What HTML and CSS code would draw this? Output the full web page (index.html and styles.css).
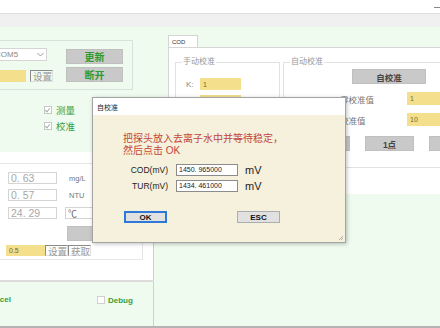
FILE: index.html
```html
<!DOCTYPE html>
<html lang="zh-CN">
<head>
    <meta charset="UTF-8">
    <meta name="viewport" content="width=device-width, initial-scale=1.0">
    <title>COD 校准</title>
    <link rel="stylesheet" href="styles.css">
</head>
<body>
    <div class="app">
        <div class="titlebar"><span class="min"></span></div>
        <div class="menubar"></div>

        <div class="workspace">
            <!-- 左侧: 连接 / 测量 -->
            <div class="left">
                <div class="conn">
                    <div class="group conn-group">
                        <div class="conn-fields">
                            <div class="combo">
                                <span>COM5</span>
                                <svg class="chev" width="7" height="5" viewBox="0 0 7 5"><path d="M0.5 1 L3.5 4 L6.5 1" fill="none" stroke="#9a9a9a" stroke-width="1"/></svg>
                            </div>
                            <div class="field-row">
                                <span class="input yellow conn-input"></span>
                                <span class="flat-btn">设置</span>
                            </div>
                        </div>
                        <div class="conn-buttons">
                            <span class="btn green">更新</span>
                            <span class="btn green">断开</span>
                        </div>
                    </div>
                    <div class="checks">
                        <div class="check"><span class="box checked"></span>测量</div>
                        <div class="check"><span class="box checked"></span>校准</div>
                    </div>
                </div>

                <div class="meas">
                    <div class="group meas-group">
                        <div class="meas-row">
                            <span class="input value">0. 63</span>
                            <span class="unit">mg/L</span>
                        </div>
                        <div class="meas-row r2">
                            <span class="input value">0. 57</span>
                            <span class="unit">NTU</span>
                        </div>
                        <div class="meas-row r3">
                            <span class="input value">24. 29</span>
                            <span class="combo small-combo"><span>℃</span>
                                <svg class="chev" width="7" height="5" viewBox="0 0 7 5"><path d="M0.5 1 L3.5 4 L6.5 1" fill="none" stroke="#9a9a9a" stroke-width="1"/></svg>
                            </span>
                        </div>
                        <div class="meas-row r4">
                            <span class="btn plain wide"></span>
                        </div>
                        <div class="meas-row r5">
                            <span class="input yellow k-input">0.5</span>
                            <span class="flat-btn">设置</span>
                            <span class="flat-btn">获取</span>
                        </div>
                    </div>
                </div>

                <div class="sep"></div>

                <div class="bottom">
                    <span class="excel">Excel</span>
                    <div class="check debug"><span class="box"></span>Debug</div>
                </div>
            </div>

            <!-- 右侧: COD 标签页 -->
            <div class="right">
                <div class="tab-head"><span class="tab">COD</span></div>
                <div class="tab-page">
                    <div class="group manual">
                        <span class="legend">手动校准</span>
                        <div class="k-row">
                            <span class="lbl">K:</span>
                            <span class="input yellow k-input">1</span>
                        </div>
                        <div class="k-row">
                            <span class="lbl">B:</span>
                            <span class="input yellow k-input">0</span>
                        </div>
                    </div>
                    <div class="group auto">
                        <span class="legend">自动校准</span>
                        <span class="btn plain auto-btn">自校准</span>
                        <div class="std-row">
                            <span class="std-lbl">零校准值</span>
                            <span class="input yellow std-input">1</span>
                        </div>
                        <div class="std-row">
                            <span class="std-lbl">校准值</span>
                            <span class="input yellow std-input">10</span>
                        </div>
                        <div class="pt-row">
                            <span class="btn plain pt-btn">0点</span>
                            <span class="btn plain pt-btn">1点</span>
                            <span class="btn plain pt-btn">2点</span>
                        </div>
                    </div>
                </div>
            </div>
        </div>

        <div class="statusline"></div>
    </div>

    <!-- 自校准 对话框 -->
    <div class="dialog">
        <div class="dialog-title">自校准</div>
        <div class="dialog-body">
            <p class="hint">把探头放入去离子水中并等待稳定，<br>然后点击 OK</p>
            <div class="mv-grid">
                <span class="mv-lbl">COD(mV)</span>
                <span class="mv-input">1450. 965000</span>
                <span class="mv-unit">mV</span>
                <span class="mv-lbl">TUR(mV)</span>
                <span class="mv-input">1434. 461000</span>
                <span class="mv-unit">mV</span>
            </div>
            <div class="dialog-buttons">
                <span class="dbtn ok">OK</span>
                <span class="dbtn esc">ESC</span>
            </div>
            <svg class="grip" width="6" height="6" viewBox="0 0 6 6"><path d="M5 1 L1 5 M5 3 L3 5" stroke="#b0b0b0" stroke-width="1"/></svg>
        </div>
    </div>
</body>
</html>
```

FILE: styles.css
```css
body {
    margin: 0;
    width: 440px;
    height: 328px;
    overflow: hidden;
    font-family: "Liberation Sans", "Noto Sans CJK SC", sans-serif;
    color: #333;
    position: relative;
}

.app {
    width: 440px;
    height: 328px;
    display: flex;
    flex-direction: column;
}

/* 窗口顶部 */
.titlebar {
    height: 13px;
    background: #fff;
    border-bottom: 1px solid #dedede;
    display: flex;
    justify-content: flex-end;
    align-items: center;
}

.titlebar .min {
    width: 6px;
    height: 1px;
    background: #888;
    margin-top: 2px;
}

.menubar {
    height: 13px;
    background: #f0f0f0;
}

.workspace {
    height: 299px;
    background: #eefbee;
    display: grid;
    grid-template-columns: 154px 1fr;
}

.statusline {
    height: 2px;
    background: #b4b4b4;
}

/* 通用 */
.group {
    box-sizing: border-box;
    border: 1px solid #d9e2d9;
    position: relative;
    flex-shrink: 0;
}

.input {
    box-sizing: border-box;
    display: inline-flex;
    align-items: center;
    height: 12px;
    border: 1px solid #d0d0d0;
    background: #fff;
    font-size: 7px;
    padding-left: 2px;
}

.yellow {
    background: #f3df8c;
    border-color: #f3df8c;
    color: #7a6a2a;
}

.btn {
    box-sizing: border-box;
    display: flex;
    align-items: center;
    justify-content: center;
    background: #c9c9c9;
    border: 1px solid #c0c0c0;
    font-weight: bold;
    flex-shrink: 0;
}

.btn.green {
    color: #2f9a2f;
    font-size: 10px;
}

.btn.plain {
    color: #444;
    font-size: 8.5px;
}

.flat-btn {
    box-sizing: border-box;
    height: 12px;
    display: inline-flex;
    align-items: center;
    padding-left: 2px;
    border-left: 1px solid #8a8a8a;
    border-top: 1px solid #8a8a8a;
    border-right: 1px solid #e0e0e0;
    border-bottom: 1px solid #e0e0e0;
    font-size: 9.5px;
    color: #999;
    width: 23px;
}

.combo {
    box-sizing: border-box;
    display: flex;
    align-items: center;
    justify-content: space-between;
    background: #fff;
    border: 1px solid #d4d4d4;
    color: #888;
    font-size: 8px;
    padding: 0 2px 0 0;
}

.check {
    display: flex;
    align-items: center;
    height: 16px;
    color: #3a9d3a;
    font-size: 9.5px;
}

.box {
    box-sizing: border-box;
    width: 8px;
    height: 8px;
    border: 1px solid #c8c8c8;
    background: #fff;
    margin-right: 4px;
    position: relative;
}

.box.checked::after {
    content: "";
    position: absolute;
    left: 1px;
    top: 0;
    width: 2px;
    height: 4px;
    border-right: 1px solid #aaa;
    border-bottom: 1px solid #aaa;
    transform: rotate(40deg);
}

/* 左上: 串口 */
.left {
    display: flex;
    flex-direction: column;
}

.conn {
    height: 125px;
}

.conn-group {
    margin: 13px 0 0 -10px;
    width: 143px;
    height: 50px;
    display: flex;
    padding: 7px 0 0 9px;
}

.conn-fields {
    width: 57px;
}

.conn-fields .combo {
    height: 13px;
    margin-left: -20px;
    padding-left: 14px;
    width: 67px;
}

.field-row {
    display: flex;
    gap: 4px;
    margin-top: 9px;
}

.conn-input {
    width: 26px;
}

.conn-buttons {
    display: flex;
    flex-direction: column;
    gap: 3px;
    margin: 1px 0 0 9px;
}

.conn-buttons .btn {
    width: 57px;
    height: 15px;
}

.checks {
    margin: 12px 0 0 44px;
}

/* 左中: 测量值 */
.meas {
    height: 128px;
    background: #fff;
    border-right: 1px solid #d0d0d0;
}

.meas-group {
    margin: 11px 0 0 -10px;
    width: 153px;
    height: 97px;
    border-color: #e6e6e6;
    padding: 8px 0 0 17px;
}

.meas-row {
    display: flex;
    align-items: center;
    height: 12px;
}

.meas-row .value {
    width: 49px;
    font-size: 10.5px;
    color: #a8a8a8;
    border-color: #d4d4d4;
}

.unit {
    margin-left: 12px;
    font-size: 7.5px;
    color: #777;
}

.r2 { margin-top: 5px; }
.r3 { margin-top: 6px; }
.r4 { margin-top: 7px; height: 15px; }
.r5 { margin-top: 4px; height: 11px; margin-left: -2px; }

.small-combo {
    margin-left: 8px;
    width: 45px;
    height: 12px;
    padding-left: 2px;
    font-size: 9px;
    color: #666;
}

.wide {
    margin-left: 59px;
    width: 60px;
    height: 15px;
}

.r5 .k-input {
    width: 39px;
    height: 11px;
}

.r5 .flat-btn:first-of-type {
    margin-left: 9px;
}

.r5 .flat-btn {
    width: 23px;
    height: 11px;
}

.sep {
    height: 2px;
    background: #dcdcdc;
}

.bottom {
    height: 44px;
    border-right: 1px solid #d0d0d0;
    box-sizing: border-box;
    display: flex;
    align-items: flex-start;
    padding-top: 13px;
}

.excel {
    margin-left: -10px;
    font-size: 8px;
    font-weight: bold;
    color: #3a9d3a;
    height: 10px;
    line-height: 10px;
}

.debug {
    margin-left: 86px;
    height: 10px;
    font-size: 8px;
    font-weight: bold;
}

.debug .box {
    border-color: #cfcfcf;
    margin-right: 3px;
}

/* 右侧: 标签页 */
.right {
    display: flex;
    flex-direction: column;
    overflow: hidden;
}

.tab-head {
    padding: 8px 0 0 14px;
    display: flex;
}

.tab {
    box-sizing: border-box;
    width: 30px;
    height: 12px;
    background: #fff;
    border: 1px solid #d4d4d4;
    border-bottom: none;
    font-size: 6px;
    color: #333;
    padding: 3px 0 0 3px;
}

.tab-page {
    margin-left: 14px;
    height: 147px;
    background: #fff;
    border-left: 1px solid #d6d6d6;
    border-top: 1px solid #d6d6d6;
    box-sizing: border-box;
    display: flex;
    align-items: flex-start;
    padding: 14px 0 0 6px;
    gap: 3px;
    overflow: hidden;
}

.legend {
    position: absolute;
    top: -6px;
    left: 6px;
    background: #fff;
    padding: 0 1px;
    font-size: 8px;
    line-height: 10px;
    color: #999;
}

.manual {
    width: 105px;
    height: 106px;
    border-color: #e2e2e2;
    padding: 15px 0 0 10px;
}

.k-row {
    display: flex;
    align-items: center;
    height: 12px;
    margin-bottom: 5px;
}

.lbl {
    width: 14px;
    font-size: 8px;
    color: #888;
}

.k-row .k-input {
    width: 41px;
    height: 12px;
}

.auto {
    width: 200px;
    height: 106px;
    border-color: #e2e2e2;
    padding: 6px 0 0 0;
}

.auto-btn {
    margin-left: 68px;
    width: 74px;
    height: 15px;
    font-size: 9px;
    color: #333;
}

.std-row {
    display: flex;
    align-items: center;
    height: 13px;
    margin-top: 8px;
}

.std-lbl {
    width: 91px;
    box-sizing: border-box;
    padding-left: 56px;
    white-space: nowrap;
    font-size: 8.5px;
    color: #777;
}

.std-input {
    margin-left: 32px;
    width: 50px;
    height: 13px;
}

.pt-row {
    display: flex;
    gap: 15px;
    margin: 10px 0 0 17px;
}

.pt-btn {
    width: 49px;
    height: 15px;
    font-size: 8.5px;
}

/* 对话框 */
.dialog {
    position: absolute;
    left: 92px;
    top: 97px;
    width: 254px;
    height: 146px;
    box-sizing: border-box;
    border: 1px solid #a4a4a4;
    box-shadow: 1px 1px 4px rgba(0, 0, 0, 0.25);
    display: flex;
    flex-direction: column;
}

.dialog-title {
    height: 17px;
    background: #fff;
    font-size: 7px;
    color: #222;
    padding-left: 4px;
    line-height: 19px;
}

.dialog-body {
    flex: 1;
    background: #f5f1dc;
    position: relative;
}

.hint {
    margin: 18px 0 0 30px;
    font-size: 10px;
    line-height: 12px;
    color: #c2453a;
}

.mv-grid {
    display: grid;
    grid-template-columns: 75px 62px auto;
    grid-auto-rows: 12px;
    column-gap: 8px;
    row-gap: 4px;
    align-items: center;
    margin-top: 7px;
}

.mv-lbl {
    text-align: right;
    font-size: 8.5px;
    color: #222;
}

.mv-input {
    box-sizing: border-box;
    height: 12px;
    background: #fff;
    border: 1px solid #8c8c8c;
    font-size: 7px;
    padding-left: 2px;
    line-height: 10px;
    color: #222;
}

.mv-unit {
    font-size: 11px;
    color: #222;
    margin-left: -1px;
}

.dialog-buttons {
    display: flex;
    margin: 19px 0 0 31px;
}

.dbtn {
    box-sizing: border-box;
    width: 43px;
    height: 12px;
    display: flex;
    align-items: center;
    justify-content: center;
    font-size: 8px;
    font-weight: bold;
    color: #111;
    background: #e1e1e1;
    border: 1px solid #adadad;
}

.dbtn.ok {
    border: 2px solid #2f78d8;
}

.dbtn.esc {
    margin-left: 70px;
}

.grip {
    position: absolute;
    right: 1px;
    bottom: 1px;
}
```
